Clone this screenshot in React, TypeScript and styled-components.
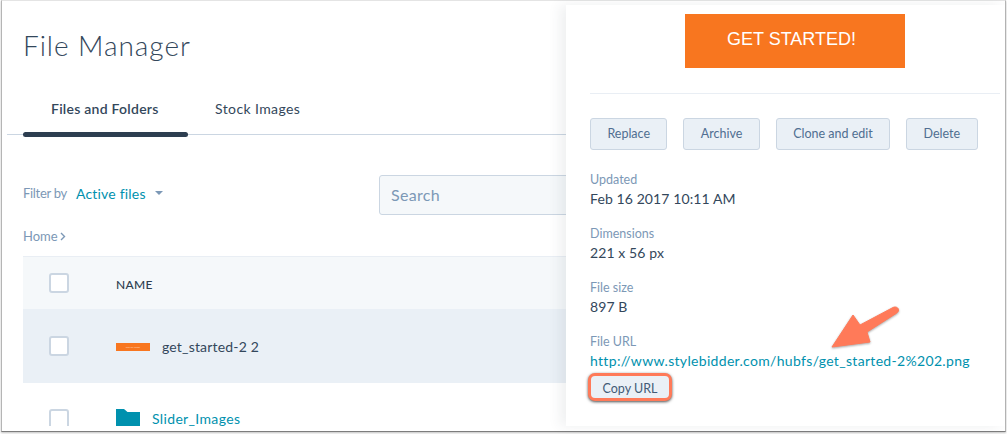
import React from "react";
import { createGlobalStyle, styled } from "styled-components";

const actions = ["Replace", "Archive", "Clone and edit", "Delete"];
const details = [
  { label: "Updated", value: "Feb 16 2017 10:11 AM" },
  { label: "Dimensions", value: "221 x 56 px" },
  { label: "File size", value: "897 B" },
];

function App(): React.ReactElement {
  return (
    <>
      <GlobalStyle />
      <Frame>
        <Main>
          <Title>File Manager</Title>
          <Tabs>
            <Tab $active>Files and Folders</Tab>
            <Tab $active={false}>Stock Images</Tab>
          </Tabs>
          <FilterRow>
            <FilterGroup>
              <FilterLabel>Filter by</FilterLabel>
              <FilterValue>Active files</FilterValue>
              <Caret />
            </FilterGroup>
            <SearchBox>Search</SearchBox>
          </FilterRow>
          <Crumb>
            Home
            <svg width="6" height="9" viewBox="0 0 6 9">
              <path d="M1 1l3.5 3.5L1 8" fill="none" stroke="#7c98b6" strokeWidth="1.4" />
            </svg>
          </Crumb>
          <Table>
            <HeaderRow>
              <Checkbox />
              <HeaderCell>NAME</HeaderCell>
            </HeaderRow>
            <SelectedRow>
              <Checkbox />
              <Thumb>
                <ThumbText>GET STARTED!</ThumbText>
              </Thumb>
              <FileName>get_started-2 2</FileName>
            </SelectedRow>
            <FolderRow>
              <Checkbox />
              <svg width="24" height="18" viewBox="0 0 24 18">
                <path d="M0 18V0h8l3.5 3H24v15z" fill="#0091ae" />
              </svg>
              <FolderName>Slider_Images</FolderName>
            </FolderRow>
          </Table>
        </Main>
        <Side>
          <PreviewWrap>
            <Preview>GET STARTED!</Preview>
          </PreviewWrap>
          <Divider />
          <Actions>
            {actions.map((a) => (
              <ActionButton key={a}>{a}</ActionButton>
            ))}
          </Actions>
          {details.map((d) => (
            <Detail key={d.label}>
              <DetailLabel>{d.label}</DetailLabel>
              <DetailValue>{d.value}</DetailValue>
            </Detail>
          ))}
          <Detail>
            <DetailLabel>File URL</DetailLabel>
            <UrlLink>http://www.stylebidder.com/hubfs/get_started-2%202.png</UrlLink>
          </Detail>
          <CopyButton>Copy URL</CopyButton>
          <Arrow width="80" height="50" viewBox="0 0 80 50">
            <path
              d="M2 42L23 10l7 10L63 2.500c2.500-1.200 5.500 0 5.500 2.500 0 1.500-1 2.500-2 3.200L37 27l3 10z"
              fill="#ff7a59"
              stroke="#ff7a59"
              strokeWidth="1"
              strokeLinejoin="round"
            />
          </Arrow>
        </Side>
      </Frame>
    </>
  );
}

export default App;

const GlobalStyle = createGlobalStyle`
  html, body {
    margin: 0;
    padding: 0;
    background: #fff;
  }
  body {
    font-family: Lato, "Open Sans", sans-serif;
    color: #33475b;
    width: 1007px;
    height: 434px;
    overflow: hidden;
  }
`;

const Frame = styled.div`
  box-sizing: border-box;
  display: flex;
  align-items: flex-start;
  width: 1005px;
  height: 432px;
  margin-left: 1px;
  background: #fff;
  border-top: 1px solid #e4e4e4;
  border-left: 1px solid #b5b5b5;
  border-right: 1px solid #b5b5b5;
  border-bottom: 1px solid #7d7d7d;
  box-shadow: 0 1px 2px rgba(0, 0, 0, 0.25);
`;

const Main = styled.div`
  flex: none;
  width: 564px;
  height: 425px;
  overflow: hidden;
`;

const Title = styled.h1`
  margin: 25px 0 0 21px;
  height: 38px;
  font-size: 28px;
  line-height: 38px;
  font-weight: 300;
  letter-spacing: 0.95px;
  color: #33475b;
`;

const Tabs = styled.div`
  display: flex;
  height: 50px;
  margin: 20px 0 0 5px;
  padding-left: 16px;
  border-bottom: 1px solid #cbd6e2;
`;

const Tab = styled.div<{ $active: boolean }>`
  position: relative;
  box-sizing: border-box;
  width: ${(props) => (props.$active ? "165px" : "auto")};
  padding: 14px 0 0 ${(props) => (props.$active ? "28px" : "27px")};
  font-size: 14px;
  line-height: 22px;
  font-weight: ${(props) => (props.$active ? 600 : 400)};
  letter-spacing: ${(props) => (props.$active ? "0.25px" : "0.4px")};
  color: #33475b;
  ${(props) =>
    props.$active
      ? `&::after {
    content: "";
    position: absolute;
    left: 0;
    right: 0;
    bottom: -3px;
    height: 5px;
    border-radius: 3px;
    background: #2d3e50;
  }`
      : ""}
`;

const FilterRow = styled.div`
  display: flex;
  align-items: center;
  margin: 40px 0 0 21px;
  height: 40px;
`;

const FilterGroup = styled.div`
  display: flex;
  align-items: center;
  width: 356px;
  flex: none;
  padding-bottom: 4px;
`;

const FilterLabel = styled.span`
  font-size: 13px;
  letter-spacing: -0.3px;
  color: #7c98b6;
`;

const FilterValue = styled.span`
  margin-left: 9px;
  font-size: 14px;
  letter-spacing: 0.2px;
  color: #0091ae;
`;

const Caret = styled.span`
  margin-left: 9px;
  width: 0;
  height: 0;
  border-left: 4px solid transparent;
  border-right: 4px solid transparent;
  border-top: 4px solid #7c98b6;
`;

const SearchBox = styled.div`
  box-sizing: border-box;
  flex: none;
  width: 240px;
  height: 40px;
  padding-left: 11px;
  border: 1px solid #cbd6e2;
  border-radius: 3px;
  background: #f5f8fa;
  font-size: 16px;
  line-height: 38px;
  letter-spacing: 0.3px;
  color: #7c98b6;
`;

const Crumb = styled.div`
  display: flex;
  align-items: center;
  gap: 2px;
  margin: 11px 0 0 21px;
  height: 20px;
  font-size: 13px;
  color: #7c98b6;
`;

const Table = styled.div`
  margin: 10px 0 0 21px;
`;

const Row = styled.div`
  display: flex;
  align-items: center;
  padding-left: 26px;
`;

const HeaderRow = styled(Row)`
  height: 52px;
  background: #f5f8fa;
  border-top: 1px solid #e9eef4;
`;

const SelectedRow = styled(Row)`
  height: 74px;
  background: #eaf0f6;
`;

const FolderRow = styled(Row)`
  height: 74px;
  align-items: flex-start;
  padding-top: 26px;
  box-sizing: border-box;
`;

const Checkbox = styled.span`
  box-sizing: border-box;
  flex: none;
  width: 20px;
  height: 20px;
  margin-right: 47px;
  background: #fff;
  border: 2px solid #cbd6e2;
  border-radius: 3px;
`;

const HeaderCell = styled.span`
  padding-top: 2px;
  font-size: 12px;
  font-weight: 500;
  letter-spacing: 0.3px;
  color: #2d3e50;
`;

const Thumb = styled.span`
  display: flex;
  align-items: center;
  justify-content: center;
  flex: none;
  width: 34px;
  height: 8px;
  margin-top: 2px;
  background: #f8761f;
  overflow: hidden;
`;

const ThumbText = styled.span`
  font-family: "Liberation Sans", Arial, sans-serif;
  font-size: 2px;
  line-height: 8px;
  white-space: nowrap;
  color: #ffd9bf;
`;

const FileName = styled.span`
  margin-left: 12px;
  font-size: 14px;
  letter-spacing: 0.18px;
  color: #33475b;
`;

const FolderName = styled.span`
  margin: 1px 0 0 12px;
  font-size: 14px;
  letter-spacing: 0.35px;
  color: #0091ae;
`;

const Side = styled.div`
  position: relative;
  box-sizing: border-box;
  flex: 1;
  height: 421px;
  margin-top: 4px;
  padding: 9px 0 0 24px;
  background: #fff;
  box-shadow: -6px 0 12px rgba(45, 62, 80, 0.08);
`;

const PreviewWrap = styled.div`
  display: flex;
  padding-left: 95px;
`;

const Preview = styled.div`
  width: 220px;
  height: 54px;
  padding-left: 42px;
  box-sizing: border-box;
  background: #f8761f;
  color: #fff;
  font-family: "Liberation Sans", Arial, sans-serif;
  font-size: 18px;
  line-height: 50px;
`;

const Divider = styled.div`
  width: 410px;
  height: 1px;
  margin-top: 25px;
  background: #e9eef4;
`;

const Actions = styled.div`
  display: flex;
  gap: 16px;
  margin-top: 24px;
  margin-bottom: 19px;
`;

const ActionButton = styled.div`
  box-sizing: border-box;
  height: 32px;
  padding: 0 16.4px;
  border: 1px solid #cbd6e2;
  border-radius: 3px;
  background: #eaf0f6;
  font-size: 12.5px;
  line-height: 30px;
  color: #506e91;
`;

const Detail = styled.div`
  height: 54px;
  padding-top: 2px;
  box-sizing: border-box;
`;

const DetailLabel = styled.div`
  font-size: 12.5px;
  line-height: 18px;
  color: #7c98b6;
`;

const DetailValue = styled.div`
  font-size: 14px;
  line-height: 20px;
  letter-spacing: 0.1px;
  color: #33475b;
`;

const UrlLink = styled.div`
  font-size: 14px;
  line-height: 20px;
  letter-spacing: 0.32px;
  white-space: nowrap;
  color: #0091ae;
`;

const CopyButton = styled.div`
  box-sizing: border-box;
  width: 84px;
  height: 28px;
  margin: -12px 0 0 -2px;
  border: 3.5px solid #ff7a59;
  border-radius: 7px;
  background: #eaf0f6;
  font-size: 12.5px;
  line-height: 26px;
  text-align: center;
  color: #425b76;
  box-shadow: 0 1px 3px rgba(0, 0, 0, 0.7);
`;

const Arrow = styled.svg`
  position: absolute;
  left: 264px;
  top: 300px;
  filter: drop-shadow(0 1px 1px rgba(0, 0, 0, 0.35));
`;
